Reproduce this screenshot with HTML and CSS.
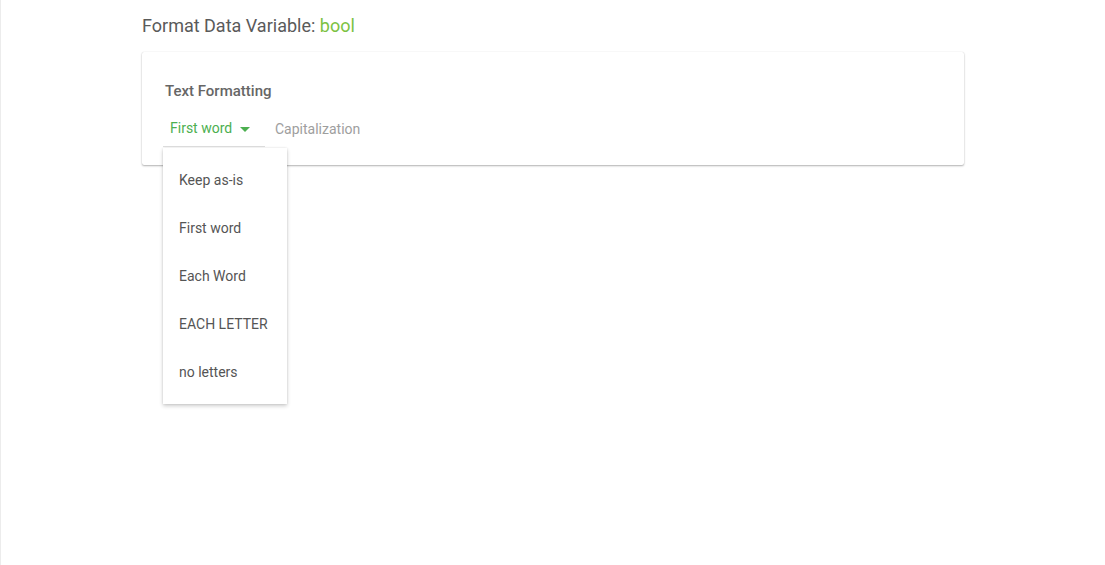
FILE: index.html
```html
<!DOCTYPE html>
<html>
<head>
<meta charset="utf-8">
<link rel="stylesheet" href="styles.css">
</head>
<body>
<div class="page">
  <div class="content">
    <h1 class="title">Format Data Variable: <span class="var">bool</span></h1>
    <div class="card">
      <div class="card-head">Text Formatting</div>
      <div class="row">
        <div class="select-wrap">
          <div class="select">
            <span class="select-value">First word</span>
            <svg class="caret" width="10" height="5" viewBox="0 0 10 5"><path d="M0 0 L10 0 L5 5 Z" fill="#4caf50"/></svg>
          </div>
          <ul class="menu">
            <li>Keep as-is</li>
            <li>First word</li>
            <li>Each Word</li>
            <li>EACH LETTER</li>
            <li>no letters</li>
          </ul>
        </div>
        <span class="label">Capitalization</span>
      </div>
    </div>
  </div>
</div>
</body>
</html>
```
FILE: styles.css
```css
html, body {
  margin: 0;
  padding: 0;
  background: #fff;
}
body {
  font-family: Roboto, "Liberation Sans", Arial, sans-serif;
  color: #555;
}
.page {
  height: 565px;
  border-left: 1px solid #ececec;
  box-sizing: border-box;
}
.content {
  margin-left: 141px;
  width: 822px;
  padding-top: 14px;
}
.title {
  margin: 0 0 14px 0;
  font-size: 18px;
  line-height: 24px;
  font-weight: 400;
  color: #5a5a5a;
}
.var {
  color: #7cc243;
}
.card {
  background: #fff;
  box-shadow: 0 1px 2px rgba(0,0,0,0.3), 0 0 1px rgba(0,0,0,0.15);
  padding: 29px 20px 18px 21px;
  border-radius: 2px;
}
.card-head {
  font-size: 15px;
  line-height: 20px;
  font-weight: 500;
  color: #666;
  margin-left: 2px;
}
.row {
  display: flex;
  align-items: center;
  margin-top: 9px;
}
.select-wrap {
  position: relative;
}
.select {
  width: 102px;
  box-sizing: border-box;
  height: 37px;
  display: flex;
  align-items: center;
  padding-left: 7px;
  border-bottom: 1px solid #dedede;
}
.select-value {
  font-size: 14px;
  color: #4caf50;
}
.caret {
  margin-left: 8px;
  margin-top: 2px;
}
.label {
  margin-left: 10px;
  font-size: 14px;
  color: #9e9e9e;
}
.menu {
  position: absolute;
  left: 0;
  top: 38px;
  width: 124px;
  margin: 0;
  padding: 8px 0;
  list-style: none;
  background: #fff;
  box-shadow: 0 2px 4px rgba(0,0,0,0.2), 0 0 2px rgba(0,0,0,0.1);
  z-index: 2;
}
.menu li {
  height: 48px;
  line-height: 48px;
  padding-left: 16px;
  font-size: 14px;
  color: #555;
  white-space: nowrap;
}
```
